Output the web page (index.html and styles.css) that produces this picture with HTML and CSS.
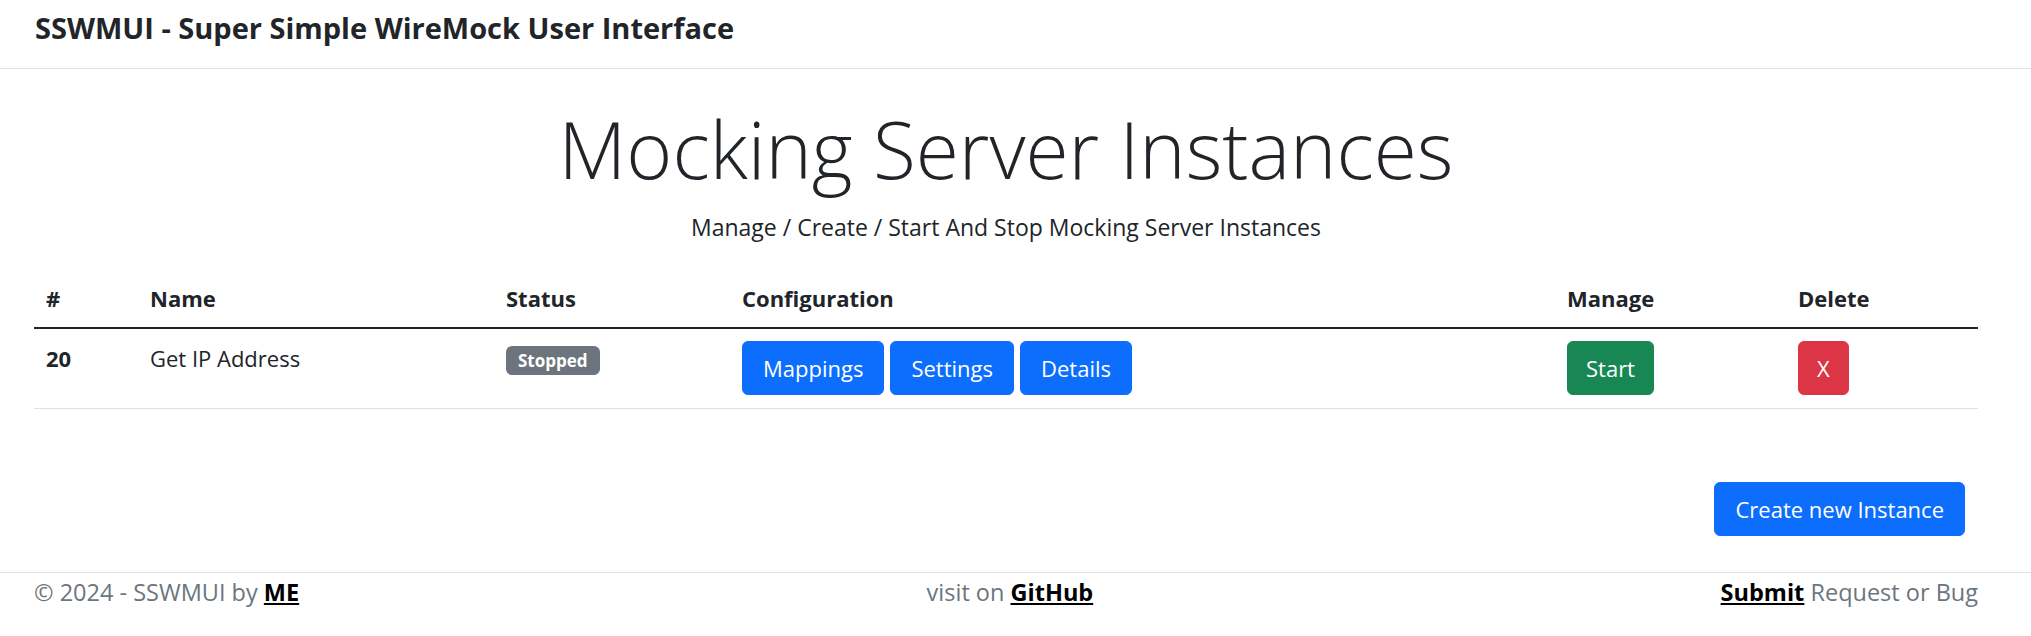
FILE: index.html
```html
<!DOCTYPE html>
<html lang="en">
<head>
<meta charset="utf-8">
<title>SSWMUI</title>
<link rel="stylesheet" href="styles.css">
</head>
<body>
<header class="navbar">
  <div class="wrap">
    <span class="brand">SSWMUI - Super Simple WireMock User Interface</span>
  </div>
</header>
<main class="wrap">
  <section class="hero">
    <h1 class="display">Mocking Server Instances</h1>
    <p class="lead">Manage / Create / Start And Stop Mocking Server Instances</p>
  </section>
  <table class="table">
    <colgroup>
      <col class="c-id"><col class="c-name"><col class="c-status"><col class="c-config"><col class="c-manage"><col class="c-delete">
    </colgroup>
    <thead>
      <tr><th>#</th><th>Name</th><th>Status</th><th>Configuration</th><th>Manage</th><th>Delete</th></tr>
    </thead>
    <tbody>
      <tr>
        <th>20</th>
        <td>Get IP Address</td>
        <td><span class="badge">Stopped</span></td>
        <td><div class="btn-row"><button class="btn btn-primary">Mappings</button><button class="btn btn-primary">Settings</button><button class="btn btn-primary">Details</button></div></td>
        <td><button class="btn btn-success btn-tight">Start</button></td>
        <td><button class="btn btn-danger btn-tight">X</button></td>
      </tr>
    </tbody>
  </table>
  <div class="actions">
    <button class="btn btn-primary">Create new Instance</button>
  </div>
</main>
<footer class="footer">
  <div class="wrap footer-row">
    <span>© 2024 - SSWMUI by <a href="#">ME</a></span>
    <span>visit on <a href="#">GitHub</a></span>
    <span><a href="#">Submit</a> Request or Bug</span>
  </div>
</footer>
</body>
</html>
```

FILE: styles.css
```css
* { box-sizing: border-box; }

html, body {
  margin: 0;
  padding: 0;
  background: #fff;
}

body {
  font-family: "Open Sans", "Noto Sans", "Liberation Sans", sans-serif;
  font-size: 22px;
  line-height: 34px;
  color: #212529;
}

.wrap {
  padding: 0 53px 0 34px;
}

.navbar {
  border-bottom: 1px solid #dee2e6;
  padding: 8px 0 20px;
}

.brand {
  display: block;
  padding-left: 1px;
  font-size: 29px;
  line-height: 40px;
  font-weight: 700;
  color: #212529;
}

.hero {
  text-align: center;
}

.display {
  margin: 34px 0 0;
  font-size: 78.5px;
  line-height: 92px;
  font-weight: 300;
  color: #212529;
}

.lead {
  margin: 16px 0 0;
  font-size: 23px;
  line-height: 32px;
  font-weight: 400;
  color: #212529;
}

.table {
  width: 100%;
  margin-top: 26px;
  border-collapse: collapse;
  table-layout: fixed;
}

.c-id { width: 104px; }
.c-name { width: 356px; }
.c-status { width: 236px; }
.c-config { width: 825px; }
.c-manage { width: 231px; }
.c-delete { width: 192px; }

.table th,
.table td {
  text-align: left;
  vertical-align: top;
  padding: 12px 12px;
  line-height: 34px;
}

.table thead th {
  font-weight: 700;
  border-bottom: 2px solid #212529;
}

.table tbody th,
.table tbody td {
  padding-bottom: 13px;
  border-bottom: 1px solid #dee2e6;
}

.table tbody th {
  font-weight: 700;
}

.badge {
  display: inline-block;
  font-size: 17px;
  line-height: 1;
  font-weight: 700;
  color: #fff;
  background: #6c757d;
  padding: 6px 12px;
  border-radius: 6px;
  vertical-align: baseline;
}

.btn-row {
  display: flex;
  gap: 6px;
}

.btn {
  display: inline-block;
  font-family: inherit;
  font-size: 22px;
  line-height: 34px;
  padding: 9px 20px;
  border: 1px solid transparent;
  border-radius: 6px;
  color: #fff;
  cursor: pointer;
}

.btn-tight {
  padding-left: 18px;
  padding-right: 18px;
}

.btn-primary { background: #0d6efd; border-color: #0d6efd; }
.btn-success { background: #198754; border-color: #198754; }
.btn-danger { background: #dc3545; border-color: #dc3545; }

.actions {
  display: flex;
  justify-content: flex-end;
  padding-right: 13px;
  margin-top: 73px;
  margin-bottom: 36px;
}

.footer {
  border-top: 1px solid #dee2e6;
  padding-top: 1px;
}

.footer-row {
  display: flex;
  justify-content: space-between;
  font-size: 23.5px;
  line-height: 36px;
  color: #6c757d;
}

.footer a {
  color: #000;
  font-weight: 700;
  text-decoration: underline;
}
```
